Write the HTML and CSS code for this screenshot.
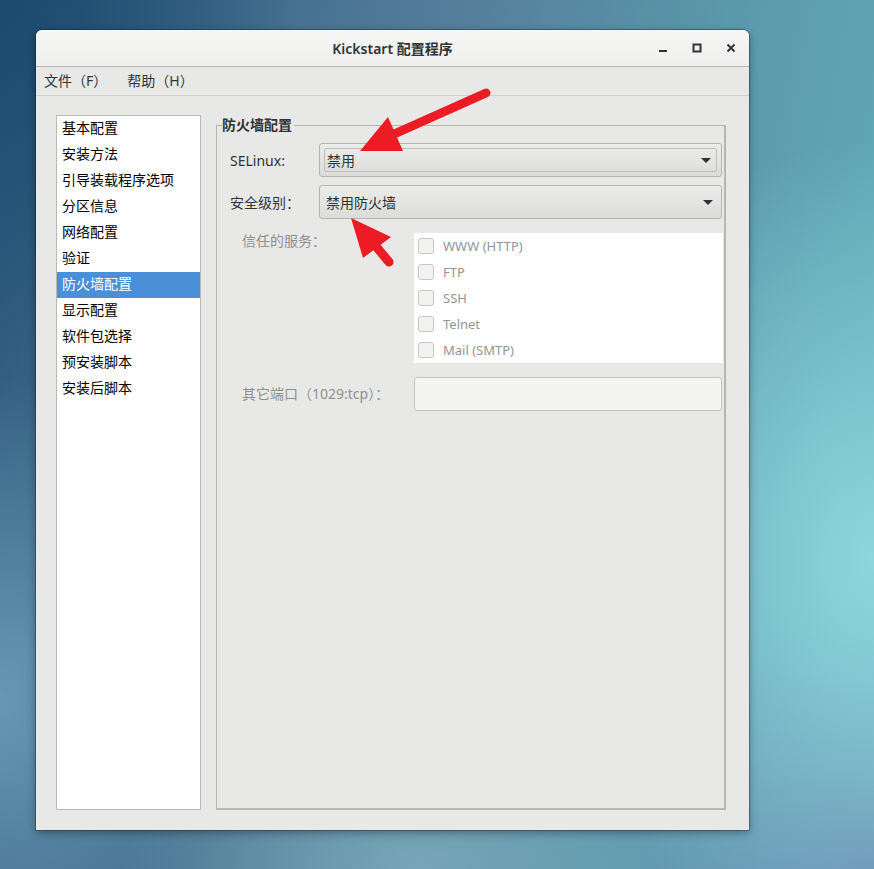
FILE: index.html
```html
<!DOCTYPE html>
<html lang="zh-CN">
<head>
<meta charset="utf-8">
<title>Kickstart 配置程序</title>
<link rel="stylesheet" href="styles.css">
</head>
<body>
<div class="desktop">
  <div class="window">
    <header class="titlebar">
      <span class="title">Kickstart 配置程序</span>
      <div class="controls">
        <svg class="ctl" width="14" height="14" viewBox="0 0 14 14"><rect x="3" y="9" width="8" height="2" fill="#2e3436"/></svg>
        <svg class="ctl" width="14" height="14" viewBox="0 0 14 14"><rect x="3.5" y="3.5" width="7" height="7" fill="none" stroke="#2e3436" stroke-width="2"/></svg>
        <svg class="ctl" width="14" height="14" viewBox="0 0 14 14"><path d="M3.5 3.5 L10.5 10.5 M10.5 3.5 L3.5 10.5" stroke="#2e3436" stroke-width="2"/></svg>
      </div>
    </header>
    <nav class="menubar">
      <span class="menu">文件（F）</span>
      <span class="menu">帮助（H）</span>
    </nav>
    <main class="content">
      <ul class="sidebar">
        <li>基本配置</li>
        <li>安装方法</li>
        <li>引导装载程序选项</li>
        <li>分区信息</li>
        <li>网络配置</li>
        <li>验证</li>
        <li class="selected">防火墙配置</li>
        <li>显示配置</li>
        <li>软件包选择</li>
        <li>预安装脚本</li>
        <li>安装后脚本</li>
      </ul>
      <fieldset class="frame">
        <legend>防火墙配置</legend>
        <div class="rows">
          <label class="lbl">SELinux:</label>
          <div class="combo focused"><span class="inner">禁用</span><span class="caret"></span></div>
          <label class="lbl">安全级别：</label>
          <div class="combo"><span class="inner">禁用防火墙</span><span class="caret"></span></div>
        </div>
        <div class="rows2">
          <label class="lbl dim">信任的服务：</label>
          <div class="services">
            <div class="svc"><span class="check"></span>WWW (HTTP)</div>
            <div class="svc"><span class="check"></span>FTP</div>
            <div class="svc"><span class="check"></span>SSH</div>
            <div class="svc"><span class="check"></span>Telnet</div>
            <div class="svc"><span class="check"></span>Mail (SMTP)</div>
          </div>
          <label class="lbl dim port">其它端口（1029:tcp）：</label>
          <div class="entry"></div>
        </div>
      </fieldset>
    </main>
  </div>
  <svg class="arrows" width="874" height="869" viewBox="0 0 874 869">
    <line x1="486" y1="93" x2="392" y2="135" stroke="#ed1c24" stroke-width="9" stroke-linecap="round"/>
    <polygon points="360,151 388,117 403,151" fill="#ed1c24"/>
    <line x1="389" y1="262" x2="374" y2="244" stroke="#ed1c24" stroke-width="9" stroke-linecap="round"/>
    <polygon points="351,218 391,237 363,258" fill="#ed1c24"/>
  </svg>
</div>
</body>
</html>
```
FILE: styles.css
```css
html, body {
  margin: 0;
  padding: 0;
}
body {
  width: 874px;
  height: 869px;
  overflow: hidden;
  font-family: "Noto Sans", "Noto Sans CJK SC", sans-serif;
  color: #2e3436;
}
.desktop {
  position: relative;
  width: 874px;
  height: 869px;
  overflow: hidden;
  background:
    radial-gradient(ellipse 320px 420px at 874px 560px, rgba(142,214,220,1), rgba(142,214,220,0) 100%),
    radial-gradient(ellipse 300px 260px at 874px 869px, rgba(104,134,176,0.95), rgba(104,134,176,0) 100%),
    radial-gradient(ellipse 300px 200px at 420px 869px, rgba(122,170,186,0.9), rgba(122,170,186,0) 100%),
    radial-gradient(ellipse 220px 320px at 0px 700px, rgba(108,158,184,0.9), rgba(108,158,184,0) 100%),
    radial-gradient(ellipse 300px 400px at 0px 0px, rgba(26,74,110,1), rgba(26,74,110,0) 100%),
    linear-gradient(100deg, #2d5b7e 0%, #557e9b 45%, #5b9cae 75%, #66afbb 100%);
}
.window {
  position: absolute;
  left: 36px;
  top: 30px;
  width: 713px;
  height: 800px;
  background: #e8e8e7;
  border-radius: 6px 6px 0 0;
  box-shadow: 0 0 0 1px rgba(20,30,40,0.35), 0 3px 10px rgba(0,0,0,0.35);
  display: flex;
  flex-direction: column;
}
.titlebar {
  height: 36px;
  flex: none;
  background: linear-gradient(#f6f6f5, #efefee);
  border-radius: 6px 6px 0 0;
  border-bottom: 1px solid #b5b5b2;
  display: flex;
  align-items: center;
  justify-content: center;
  position: relative;
}
.title {
  font-size: 14px;
  font-weight: 600;
  color: #2e3436;
}
.controls {
  position: absolute;
  right: 11px;
  top: 11px;
  display: flex;
  gap: 20px;
}
.ctl {
  display: block;
}
.menubar {
  height: 25px;
  padding-bottom: 3px;
  flex: none;
  border-bottom: 1px solid #cfcfcc;
  display: flex;
  align-items: center;
  padding-left: 8px;
  gap: 20px;
  font-size: 14px;
  color: #2e3436;
}
.content {
  flex: 1;
  display: flex;
  gap: 15px;
  padding: 19px 23px 20px 20px;
  min-height: 0;
}
.sidebar {
  list-style: none;
  margin: 0;
  padding: 0;
  width: 143px;
  background: #fff;
  border: 1px solid #b9b9b6;
  font-size: 14px;
  color: #000;
}
.sidebar li {
  height: 26px;
  line-height: 24px;
  padding-left: 5px;
}
.sidebar li.selected {
  background: #4a90d9;
  color: #fff;
}
.frame {
  flex: 1;
  margin: 2px 0 0;
  padding: 0 2px 0 13px;
  border: 1px solid #b6b6b3;
  border-bottom-width: 2px;
  border-right-width: 2px;
  min-width: 0;
}
.frame legend {
  font-size: 14px;
  font-weight: bold;
  padding: 0 2px 0 0;
  margin-left: -8px;
  line-height: 16px;
  color: #2e3436;
}
.rows {
  display: grid;
  grid-template-columns: 89px 1fr;
  row-gap: 8px;
  margin-top: 10px;
  align-items: center;
}
.lbl {
  font-size: 14px;
  color: #2e3436;
}
.lbl.dim {
  color: #8e9192;
}
.combo {
  height: 32px;
  border: 1px solid #b4b4b1;
  border-radius: 3px;
  background: linear-gradient(#ececeb, #dcdcda);
  display: flex;
  align-items: center;
  justify-content: space-between;
  padding: 0 8px 0 6px;
  font-size: 14px;
  color: #2e3436;
  box-sizing: content-box;
}
.combo.focused {
  position: relative;
  padding: 4px;
  height: 24px;
}
.combo.focused .inner {
  flex: 1;
  height: 22px;
  border: 1px solid #bfbfbc;
  border-radius: 2px;
  padding-left: 2px;
  display: flex;
  align-items: center;
}
.combo.focused .caret {
  position: absolute;
  right: 10px;
}
.caret {
  width: 0;
  height: 0;
  border-left: 5px solid transparent;
  border-right: 5px solid transparent;
  border-top: 5px solid #2e3436;
}
.rows2 {
  display: grid;
  grid-template-columns: 172px 1fr;
  row-gap: 14px;
  margin-top: 14px;
  padding-left: 12px;
}
.rows2 .lbl.dim {
  line-height: 16px;
}
.rows2 .lbl.port {
  align-self: center;
}
.services {
  background: #fff;
  margin-right: -1px;
}
.svc {
  height: 26px;
  display: flex;
  align-items: center;
  font-size: 13px;
  color: #929596;
}
.check {
  width: 14px;
  height: 14px;
  border: 1px solid #c6c6c3;
  border-radius: 3px;
  background: #f2f2f1;
  margin: 0 9px 0 4px;
}
.entry {
  height: 32px;
  border: 1px solid #c3c3c0;
  border-radius: 3px;
  background: #f4f4f3;
}
.arrows {
  position: absolute;
  left: 0;
  top: 0;
  pointer-events: none;
}
```
